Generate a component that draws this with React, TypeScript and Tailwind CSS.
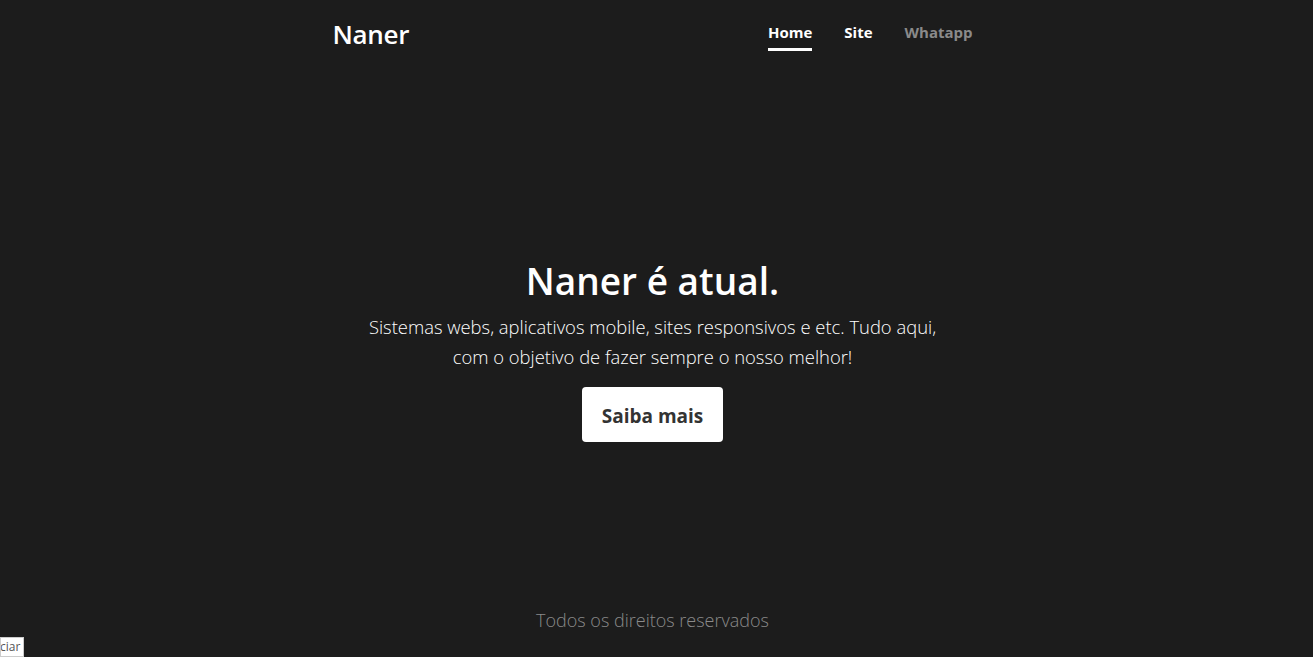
export default function App() {
  return (
    <div
      className="relative min-h-screen w-full bg-[#1c1c1c] text-white"
      style={{ fontFamily: '"Open Sans", "Noto Sans", sans-serif' }}
    >
      <div className="w-[1305px]">
        <header className="mx-auto flex h-[68px] w-[640px] items-center justify-between">
          <span className="text-[26px] font-semibold leading-none tracking-[-0.3px]">Naner</span>
          <nav className="-mt-[4px] flex items-center gap-8 text-[15px] font-bold">
            <a href="#" className="relative flex flex-col items-center">
              <span className="leading-[30px]">Home</span>
              <span className="absolute left-0 right-0 top-[31px] h-[3px] bg-white" />
            </a>
            <a href="#" className="leading-[30px]">Site</a>
            <a href="#" className="leading-[30px] text-[#8a8a8a]">Whatapp</a>
          </nav>
        </header>

        <main className="flex flex-col items-center pt-[189px] text-center">
          <h1 className="text-[37px] font-semibold leading-[48px]">Naner é atual.</h1>
          <p className="mt-[7px] w-[590px] text-[18.4px] font-light leading-[30px]">
            Sistemas webs, aplicativos mobile, sites responsivos e etc. Tudo aqui, com o objetivo de fazer
            sempre o nosso melhor!
          </p>
          <button className="mt-[15px] h-[55px] w-[141px] rounded-[4px] bg-white pt-[3px] text-[19px] font-bold text-[#333]">
            Saiba mais
          </button>
        </main>

        <footer className="mt-[164px] text-center text-[18px] font-light leading-[28px] text-[#8a8a8a]">
          Todos os direitos reservados
        </footer>
      </div>

      <div className="absolute bottom-0 left-0 h-[20px] w-[24px] overflow-hidden border border-[#ccc] bg-white text-[12px] leading-[18px] text-[#555]">
        <span className="-ml-[1px]">ciar</span>
      </div>
    </div>
  );
}
